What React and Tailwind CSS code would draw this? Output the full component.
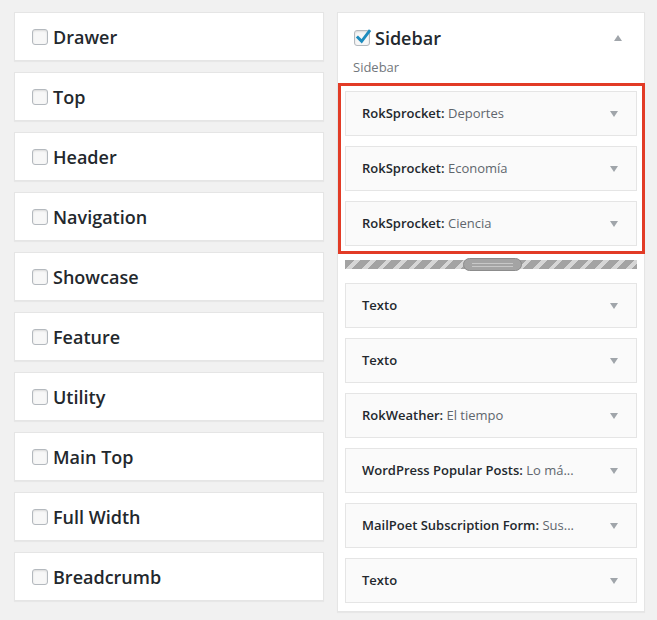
const areas = [
  'Drawer', 'Top', 'Header', 'Navigation', 'Showcase',
  'Feature', 'Utility', 'Main Top', 'Full Width', 'Breadcrumb',
]

const highlighted = [
  { title: 'RokSprocket', sub: 'Deportes' },
  { title: 'RokSprocket', sub: 'Economía' },
  { title: 'RokSprocket', sub: 'Ciencia' },
]

const rest = [
  { title: 'Texto' },
  { title: 'Texto' },
  { title: 'RokWeather', sub: 'El tiempo' },
  { title: 'WordPress Popular Posts', sub: 'Lo má...' },
  { title: 'MailPoet Subscription Form', sub: 'Sus...' },
  { title: 'Texto' },
]

function Checkbox({ checked }) {
  return (
    <span className="relative inline-block w-4 h-4 shrink-0 rounded-[3px] border border-[#b4b9be] bg-[#f7f7f7] shadow-[inset_0_1px_2px_rgba(0,0,0,0.12)]">
      {checked && (
        <svg viewBox="0 0 16 16" className="absolute -left-[1px] -top-[3px] w-[18px] h-[18px]">
          <path d="M3.5 8.5 L6.8 11.8 L13.5 3" fill="none" stroke="#1e8cbe" strokeWidth="2.6" strokeLinecap="square" />
        </svg>
      )}
    </span>
  )
}

function Arrow({ up }) {
  return (
    <svg viewBox="0 0 8 6" className="w-2 h-[6px]">
      <path d={up ? 'M4 0 L8 6 L0 6 Z' : 'M0 0 L8 0 L4 6 Z'} fill="#a0a5aa" />
    </svg>
  )
}

function Widget({ title, sub }) {
  return (
    <div className="h-[45px] flex items-center justify-between bg-[#fafafa] border border-[#e5e5e5] pl-4 pr-[18px] text-[13px]">
      <span className="whitespace-nowrap">
        <span className="font-semibold text-[#23282d]">{title}{sub && ':'}</span>
        {sub && <span className="text-[#5f666d]"> {sub}</span>}
      </span>
      <Arrow />
    </div>
  )
}

export default function App() {
  return (
    <div
      className="w-[657px] h-[620px] bg-[#f1f1f1] flex gap-[13px] pl-[14px] pt-3"
      style={{ fontFamily: '"Open Sans", "Noto Sans", sans-serif' }}
    >
      {/* columna de áreas inactivas */}
      <div className="w-[310px] flex flex-col gap-[11px]">
        {areas.map(a => (
          <div key={a} className="h-[49px] flex items-center gap-[5px] bg-white border border-[#e5e5e5] shadow-[0_1px_1px_rgba(0,0,0,0.04)] pl-[17px]">
            <Checkbox />
            <span className="text-[18px] font-semibold text-[#23282d] leading-6">{a}</span>
          </div>
        ))}
      </div>

      {/* sidebar abierto */}
      <div className="w-[308px] h-[600px] bg-white border border-[#e5e5e5] shadow-[0_1px_1px_rgba(0,0,0,0.04)] pt-[13px] pb-[10px]">
        <div className="flex items-center justify-between pl-4 pr-[22px]">
          <div className="flex items-center gap-[5px]">
            <Checkbox checked />
            <span className="text-[18px] font-semibold text-[#23282d] leading-6">Sidebar</span>
          </div>
          <Arrow up />
        </div>
        <p className="mt-2 pl-[15px] text-[13px] leading-[18px] text-[#72777c]">Sidebar</p>

        <div className="mt-[15px] px-[7px] flex flex-col gap-[10px]">
          <div className="relative flex flex-col gap-[10px]">
            {highlighted.map((w, i) => <Widget key={i} {...w} />)}
            <span className="absolute -left-[7px] -right-[8px] -top-[8px] -bottom-[8px] border-[3px] border-[#e23b26] pointer-events-none" />
          </div>

          <div className="relative my-1 h-[9px] bg-[repeating-linear-gradient(135deg,#a3a3a3_0_7px,#d6d6d6_7px_11px)]">
            <span className="absolute left-[118px] -top-[2px] w-[59px] h-[13px] rounded-full bg-[#a4a4a4] border border-[#8c8c8c] flex flex-col justify-center gap-[2px] px-2">
              <span className="h-px bg-[#c8c8c8]" />
              <span className="h-px bg-[#c8c8c8]" />
            </span>
          </div>

          {rest.map((w, i) => <Widget key={i} {...w} />)}
        </div>
      </div>
    </div>
  )
}
